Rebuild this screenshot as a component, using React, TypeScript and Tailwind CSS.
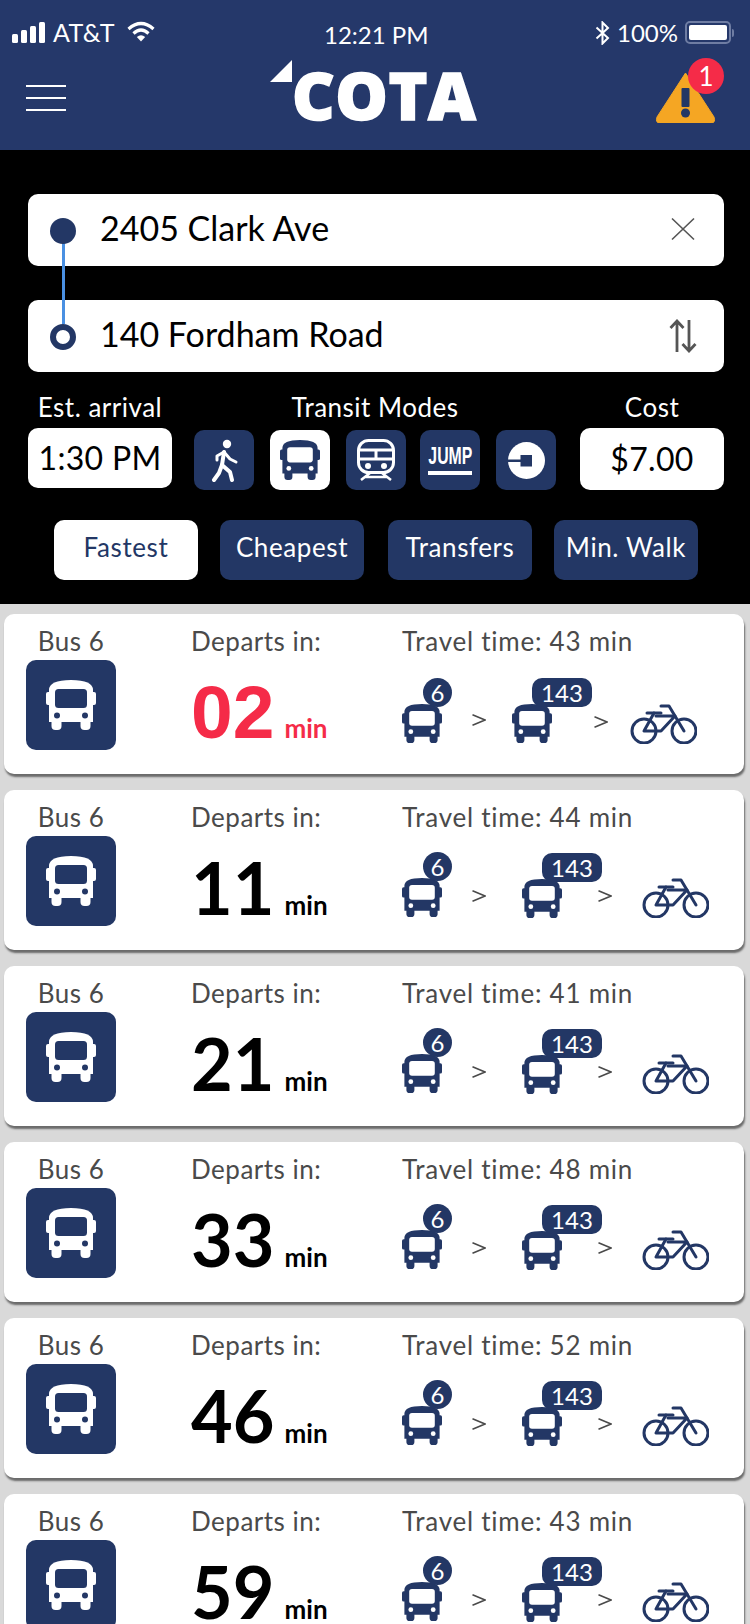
import React from "react";

const NAVY = "#233765";

function Bus({ color = NAVY, hole = "#ffffff", className = "" }: { color?: string; hole?: string; className?: string }) {
  return (
    <svg viewBox="0 0 50 50" preserveAspectRatio="none" className={className}>
      <path d="M3 10 Q3 0 25 0 Q47 0 47 10 V42 H3 Z" fill={color} />
      <rect x="0" y="12" width="6" height="13" rx="2" fill={color} />
      <rect x="44" y="12" width="6" height="13" rx="2" fill={color} />
      <rect x="5.5" y="38" width="10" height="12" rx="4" fill={color} />
      <rect x="34.5" y="38" width="10" height="12" rx="4" fill={color} />
      <rect x="9" y="9" width="32" height="19" rx="3.5" fill={hole} />
      <circle cx="11" cy="35.5" r="3" fill={hole} />
      <circle cx="39" cy="35.5" r="3" fill={hole} />
    </svg>
  );
}

function Bike() {
  return (
    <svg viewBox="0 0 67 40" className="w-[67px] h-[40px]" fill="none" stroke={NAVY} strokeWidth="3" strokeLinecap="round" strokeLinejoin="round">
      <circle cx="14" cy="27" r="12" />
      <circle cx="54" cy="27" r="12" />
      <path d="M31 2 H39 L54 27" />
      <path d="M17 9 H31" />
      <path d="M24 9 L14 27 H31 L45 12 H26" />
    </svg>
  );
}

function Gt() {
  return (
    <svg viewBox="0 0 14 12" className="w-[14px] h-[12px]" fill="none" stroke="#4a4a4a" strokeWidth="1.5">
      <path d="M0.5 0.7 L13 6 L0.5 11.3" />
    </svg>
  );
}

const rows = [
  { t: 43, n: "02", first: true },
  { t: 44, n: "11" },
  { t: 41, n: "21" },
  { t: 48, n: "33" },
  { t: 52, n: "46" },
  { t: 43, n: "59" },
];

function Card({ t, n, first }: { t: number; n: string; first?: boolean }) {
  return (
    <div className="shrink-0 h-[160px] ml-1 mr-[6px] mb-4 bg-white rounded-[10px] shadow-[1px_3px_2px_#6b6b6b] flex pl-[22px]">
      <div className="w-[90px] flex flex-col items-center">
        <div className="mt-[13px] h-[28px] text-[26px] leading-[28px] text-[#4a4a4a] tracking-[0.5px] whitespace-nowrap">Bus 6</div>
        <div className="mt-[5px] w-[90px] h-[90px] rounded-[10px] bg-[#233765] flex items-center justify-center">
          <Bus color="#ffffff" hole="#233765" className="w-[50px] h-[50px]" />
        </div>
      </div>
      <div className="ml-[75px] w-[211px] flex flex-col">
        <div className="mt-[13px] h-[28px] text-[26px] leading-[28px] text-[#4a4a4a] tracking-[0.5px] whitespace-nowrap">Departs in:</div>
        {first ? (
          <div className="mt-[21px] flex items-baseline text-[#f52b48] font-bold h-[72px] leading-[72px] font-['Liberation_Sans',sans-serif]">
            <span className="text-[75px]">{n}</span>
            <span className="ml-[10px] text-[26px] font-bold font-['Lato',sans-serif]">min</span>
          </div>
        ) : (
          <div className="mt-[20px] flex items-baseline text-black font-bold h-[72px] leading-[72px]">
            <span className="text-[72px]">{n}</span>
            <span className="ml-[10px] text-[26px] font-bold">min</span>
          </div>
        )}
      </div>
      <div className="flex flex-col">
        <div className="mt-[13px] h-[28px] text-[26px] leading-[28px] text-[#4a4a4a] tracking-[0.75px] whitespace-nowrap">Travel time: {t} min</div>
        <div className={first ? "mt-[49px] h-[40px] flex items-start" : "mt-[47px] h-[40px] flex items-start"}>
          <div className="relative w-[40px] h-[39px]">
            <Bus className="w-[40px] h-[39px]" />
            <div className="absolute left-[21px] top-[-26px] w-[29px] h-[29px] rounded-full bg-[#233765] text-white text-[24px] leading-[29px] text-center">6</div>
          </div>
          <div className={first ? "ml-[30px] mt-[10px]" : "ml-[30px] mt-[12px]"}><Gt /></div>
          <div className={first ? "relative ml-[26px] w-[40px] h-[39px]" : "relative ml-[36px] mt-[1px] w-[40px] h-[39px]"}>
            <Bus className="w-[40px] h-[39px]" />
            <div className="absolute left-[20px] top-[-26px] w-[60px] h-[29px] rounded-[10px] bg-[#233765] text-white text-[24px] leading-[29px] text-center">143</div>
          </div>
          <div className={first ? "ml-[42px] mt-[12px]" : "ml-[36px] mt-[12px]"}><Gt /></div>
          <div className={first ? "ml-[22px]" : "ml-[30px]"}><Bike /></div>
        </div>
      </div>
    </div>
  );
}

function ModeBox({ white, className, children }: { white?: boolean; className?: string; children: React.ReactNode }) {
  return (
    <div className={`w-[60px] h-[60px] rounded-[10px] flex items-center justify-center ${white ? "bg-white" : "bg-[#233765]"} ${className ?? ""}`}>
      {children}
    </div>
  );
}

function Tab({ label, active, className }: { label: string; active?: boolean; className?: string }) {
  return (
    <div className={`w-[144px] h-[60px] pb-[6px] rounded-[10px] flex items-center justify-center text-[26px] tracking-[0.6px] ${active ? "bg-white text-[#233765]" : "bg-[#233765] text-white"} ${className ?? ""}`}>
      {label}
    </div>
  );
}

export default function App() {
  return (
    <div className="w-[750px] h-[1624px] overflow-hidden flex flex-col bg-[#d9d9d9] font-['Lato',sans-serif]">
      <header className="h-[150px] shrink-0 bg-[#25386a] text-white flex flex-col">
        <div className="h-[48px] flex items-center relative text-[24px] pt-[18px]">
          <div className="ml-3 flex items-end gap-[3px] h-[22px] -mt-[2px]">
            <div className="w-[6px] h-[9px] rounded-[1.5px] bg-white" />
            <div className="w-[6px] h-[13px] rounded-[1.5px] bg-white" />
            <div className="w-[6px] h-[17px] rounded-[1.5px] bg-white" />
            <div className="w-[6px] h-[21px] rounded-[1.5px] bg-white" />
          </div>
          <div className="ml-[8px] -mt-[1px] leading-none text-[25px] tracking-[0.3px]">AT&amp;T</div>
          <svg viewBox="0 0 28 21" className="ml-3 -mt-[3px] w-[28px] h-[21px]" fill="none" stroke="#fff" strokeWidth="3.2">
            <path d="M1.5 8 Q14 -3 26.5 8" />
            <path d="M6.5 12.5 Q14 5.5 21.5 12.5" />
            <path d="M14 20.5 L9.8 16 Q14 12.5 18.2 16 Z" fill="#fff" stroke="none" />
          </svg>
          <div className="absolute left-[324px] top-[23px] leading-none text-[24px]">12:21 PM</div>
          <div className="ml-auto flex items-center mr-4 -mt-[1px]">
            <svg viewBox="0 0 15 24" className="w-[15px] h-[24px]" fill="none" stroke="#fff" strokeWidth="2">
              <path d="M1.5 6.5 L13 17 L7.5 22.5 V1.5 L13 7 L1.5 17.5" />
            </svg>
            <div className="ml-[7px] leading-none">100%</div>
            <div className="ml-[7px] w-[46px] h-[23px] rounded-[5px] border-2 border-[#6f7da3] p-[2px]">
              <div className="w-full h-full rounded-[2px] bg-white" />
            </div>
            <div className="w-[2px] h-[8px] ml-[1px] rounded-r-[2px] bg-[#6f7da3]" />
          </div>
        </div>
        <div className="flex-1 flex items-start justify-between relative">
          <div className="ml-[26px] mt-[37px] w-[40px] flex flex-col gap-[10px]">
            <div className="h-[2px] bg-white" />
            <div className="h-[2px] bg-white" />
            <div className="h-[2px] bg-white" />
          </div>
          <div className="absolute left-[292px] top-[13px] h-[66px] text-[66px] leading-[66px] font-extrabold font-['Open_Sans',sans-serif] tracking-[0.5px] [-webkit-text-stroke:1.5px_white]">COTA</div>
          <svg viewBox="0 0 22 22" className="absolute left-[270px] top-[12px] w-[22px] h-[22px]"><path d="M22 0 V22 H0 Z" fill="#fff" /></svg>
          <div className="relative mr-[34px] mt-[22px] w-[61px] h-[53px]">
            <svg viewBox="0 0 61 53" className="w-[61px] h-[53px]">
              <path d="M30.5 3 L59 47 Q61 53 56 53 H5 Q0 53 2 47 Z" fill="#f5a623" stroke="#f5a623" strokeLinejoin="round" />
              <rect x="26.5" y="18" width="8" height="19" rx="1" fill={NAVY} />
              <ellipse cx="30.5" cy="43" rx="4.5" ry="4.5" fill={NAVY} />
            </svg>
            <div className="absolute left-[33px] top-[-12px] w-[36px] h-[36px] rounded-full bg-[#f52b48] text-white text-[26px] leading-[36px] text-center">1</div>
          </div>
        </div>
      </header>

      <section className="h-[454px] shrink-0 bg-black flex flex-col text-white">
        <div className="relative mt-[44px] ml-[28px] mr-[26px] flex flex-col gap-[34px]">
          <div className="h-[72px] rounded-[10px] bg-white flex items-center justify-between pl-[72px] pr-[29px] text-black text-[34px]">
            <span className="pb-[6px]">2405 Clark Ave</span>
            <svg viewBox="0 0 24 24" className="w-[24px] h-[24px] -mt-[2px]" fill="none" stroke="#555" strokeWidth="1.6"><path d="M1 1.5 L23 22.5 M23 1.5 L1 22.5" /></svg>
          </div>
          <div className="h-[72px] rounded-[10px] bg-white flex items-center justify-between pl-[72px] pr-[27px] text-black text-[34px]">
            <span className="pb-[6px]">140 Fordham Road</span>
            <svg viewBox="0 0 28 34" className="w-[28px] h-[34px]" fill="none" stroke="#555" strokeWidth="2.8"><path d="M8 33 V2 M1.5 9 L8 2 L14.5 9 M20 1 V32 M13.5 25 L20 32 L26.5 25" /></svg>
          </div>
          <div className="absolute left-[34px] top-[46px] w-[3px] h-[84px] bg-[#4a90e2]" />
          <div className="absolute left-[22px] top-[24px] w-[26px] h-[26px] rounded-full bg-[#233765]" />
          <div className="absolute left-[22px] top-[130px] w-[26px] h-[26px] rounded-full bg-white border-[6px] border-[#233765]" />
        </div>

        <div className="mt-[21px] ml-[28px] mr-[26px] flex text-[26px] leading-[28px]">
          <div className="w-[144px] flex flex-col items-center">
            <div className="h-[28px] tracking-[0.5px] whitespace-nowrap">Est. arrival</div>
            <div className="mt-[7px] w-[144px] h-[60px] rounded-[10px] bg-white text-black text-[32px] flex items-center justify-center tracking-[0.3px]">1:30 PM</div>
          </div>
          <div className="flex-1 flex flex-col items-center pr-[2px]">
            <div className="h-[28px] tracking-[0.5px]">Transit Modes</div>
            <div className="mt-[9px] flex">
              <ModeBox>
                <svg viewBox="0 0 30 44" className="w-[30px] h-[44px]" fill="none" stroke="#fff" strokeWidth="4" strokeLinecap="round" strokeLinejoin="round">
                  <circle cx="18" cy="6" r="4.2" fill="#fff" stroke="none" />
                  <path d="M15 14 L13 27 L21 34 L23 42" />
                  <path d="M13 27 L10 35 L5 42" />
                  <path d="M15 14 L8 18 L8 22" strokeWidth="3" />
                  <path d="M15 14 L21 21 L27 24" strokeWidth="3" />
                </svg>
              </ModeBox>
              <ModeBox white className="ml-4"><Bus className="w-[40px] h-[40px]" /></ModeBox>
              <ModeBox className="ml-4">
                <svg viewBox="0 0 38 42" className="w-[38px] h-[42px]" fill="none" stroke="#fff" strokeWidth="3">
                  <rect x="1.5" y="1.5" width="35" height="32" rx="10" />
                  <path d="M2 11 H36 M2 20 H36 M19 11 V20" />
                  <circle cx="11" cy="27" r="3" fill="#fff" stroke="none" />
                  <circle cx="27" cy="27" r="3" fill="#fff" stroke="none" />
                  <path d="M13 34 L4 41 M25 34 L34 41 M8 38 H30" strokeWidth="2.5" />
                </svg>
              </ModeBox>
              <ModeBox className="ml-[14px]">
                <div className="flex flex-col items-center w-[44px]">
                  <div className="h-[22px] leading-[22px] text-[24px] font-bold font-['Liberation_Sans',sans-serif] scale-x-[0.66] whitespace-nowrap">JUMP</div>
                  <div className="mt-[4px] w-[44px] h-[4px] bg-white" />
                </div>
              </ModeBox>
              <ModeBox className="ml-4">
                <svg viewBox="0 0 37 37" className="w-[37px] h-[37px]">
                  <circle cx="18.5" cy="18.5" r="18.5" fill="#fff" />
                  <rect x="0" y="17.5" width="14" height="2.5" fill={NAVY} />
                  <rect x="12.5" y="13" width="11.5" height="11.5" fill={NAVY} />
                </svg>
              </ModeBox>
            </div>
          </div>
          <div className="w-[144px] flex flex-col items-center">
            <div className="h-[28px] tracking-[0.5px]">Cost</div>
            <div className="mt-[7px] w-[144px] h-[62px] rounded-[10px] bg-white text-black text-[32px] flex items-center justify-center tracking-[0.3px]">$7.00</div>
          </div>
        </div>

        <div className="mt-[30px] ml-[54px] flex">
          <Tab label="Fastest" active />
          <Tab label="Cheapest" className="ml-[22px]" />
          <Tab label="Transfers" className="ml-6" />
          <Tab label="Min. Walk" className="ml-[22px]" />
        </div>
      </section>

      <main className="flex-1 min-h-0 overflow-hidden pt-[10px] flex flex-col">
        {rows.map((r, i) => (
          <Card key={i} t={r.t} n={r.n} first={r.first} />
        ))}
      </main>
    </div>
  );
}
